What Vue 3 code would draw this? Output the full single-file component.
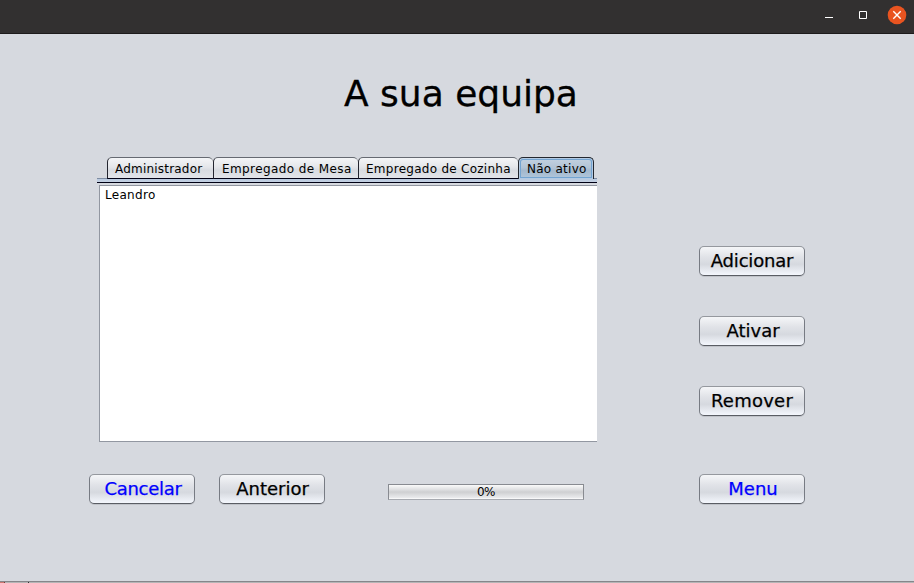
<script setup>
import { ref } from 'vue'

const tabs = [
  { label: 'Administrador', cls: 'tab-admin' },
  { label: 'Empregado de Mesa', cls: 'tab-mesa' },
  { label: 'Empregado de Cozinha', cls: 'tab-cozinha' },
  { label: 'Não ativo', cls: 'tab-inativo' },
]
const active = ref(3)
const members = ['Leandro']
const progress = ref(0)
</script>

<template>
  <div class="window">
    <header class="titlebar">
      <svg class="controls" width="90" height="33" viewBox="0 0 90 33">
        <path d="M1 17.5h8" stroke="#fff" fill="none" />
        <path d="M35.5 11.5h7v7h-7z" stroke="#fff" fill="none" />
        <circle cx="73" cy="15" r="9.3" fill="#e95420" />
        <path d="M69.3 11.3l7.4 7.4M76.7 11.3l-7.4 7.4" stroke="#fff" stroke-width="1.4" fill="none" />
      </svg>
    </header>

    <main class="content">
      <h1 class="title"><span>A sua equipa</span></h1>

      <div class="middle">
        <section class="tabpane">
          <nav class="tabs">
            <button
              v-for="(tab, i) in tabs"
              :key="tab.label"
              class="tab"
              :class="[tab.cls, { selected: i === active }]"
              @click="active = i"
            ><span>{{ tab.label }}</span></button>
          </nav>
          <div class="band"></div>
          <ul class="list">
            <li v-for="m in members" :key="m">{{ m }}</li>
          </ul>
        </section>

        <aside class="actions">
          <button class="btn adicionar">Adicionar</button>
          <button class="btn ativar">Ativar</button>
          <button class="btn remover">Remover</button>
        </aside>
      </div>

      <footer class="bottom">
        <button class="btn link cancelar">Cancelar</button>
        <button class="btn anterior">Anterior</button>
        <div class="progress">
          <div class="fill" :style="{ width: progress + '%' }"></div>
          <span>{{ progress }}%</span>
        </div>
        <button class="btn link menu">Menu</button>
      </footer>
    </main>
    <div class="edge"><i class="red"></i><i class="mark"></i><i class="gray"></i><i class="mark dark"></i></div>
  </div>
</template>

<style>
body {
  margin: 0;
  overflow: hidden;
}
</style>

<style scoped>
* {
  box-sizing: border-box;
}
.window {
  width: 914px;
  height: 583px;
  display: flex;
  flex-direction: column;
  background: #d6d9df;
  color: #000;
  font: 12px "DejaVu Sans", sans-serif;
}
.titlebar {
  height: 34px;
  flex: none;
  display: flex;
  justify-content: flex-end;
  background: #323030;
  border-bottom: 1px solid #1d1b1b;
}
.controls {
  display: block;
}
.content {
  height: 547px;
  flex: none;
}
.title {
  height: 123px;
  margin: 0;
  padding: 39px 0 0 344px;
  font-size: 36px;
  font-weight: 400;
  line-height: 42px;
  white-space: nowrap;
  -webkit-text-stroke: 0.3px #000;
}
.middle {
  display: flex;
  height: 285px;
  padding-left: 97px;
}
.tabpane {
  width: 500px;
  height: 285px;
  flex: none;
}
.tabs {
  display: flex;
  height: 22px;
}
.tabs::before,
.tabs::after {
  content: "";
  width: 10px;
  height: 1px;
  align-self: flex-end;
  background: #7f8da3;
}
.tabs::after {
  width: auto;
  flex: 1;
}
.tab {
  flex: none;
  height: 22px;
  margin: 0;
  padding: 0 0 0 7px;
  border: 1px solid #23252f;
  border-top-color: #666a72;
  border-right: 0;
  border-bottom-color: #000014;
  border-radius: 5px 5px 0 0;
  background: linear-gradient(#f4f5f7, #e4e6ea 45%, #d8dbe1 60%, #e2e4e9);
  color: #000;
  font: 12px/22px "DejaVu Sans", sans-serif;
  text-align: left;
  white-space: nowrap;
}
.tab-admin {
  width: 106px;
  letter-spacing: 0.2px;
}
.tab-mesa {
  width: 145px;
  padding-left: 8px;
  letter-spacing: 0.4px;
}
.tab-cozinha {
  width: 160px;
  letter-spacing: 0.27px;
}
.tab-inativo {
  width: 76px;
  padding-left: 8px;
  letter-spacing: 0.25px;
}
.tab.selected {
  border: 1px solid #23272f;
  border-bottom: 0;
  background: linear-gradient(#c4d2e1, #b3c4d6 45%, #a3b8cd 60%, #b2c8dd);
  box-shadow: inset 0 0 0 1px #b3cae3, inset 0 0 0 2px #73a4d1;
}
.band {
  height: 4px;
  background: linear-gradient(#b8c9df, #c5d1e2);
  border-bottom: 1px solid #000014;
}
.list {
  height: 257px;
  margin: 2px 0 0 2px;
  padding: 2px 5px;
  border: 1px solid #9297a1;
  border-right: 0;
  background: #fff;
  list-style: none;
  line-height: 15px;
  letter-spacing: 0.3px;
}
.actions {
  display: flex;
  flex-direction: column;
  gap: 40px;
  padding: 89px 0 0 102px;
}
.btn {
  width: 106px;
  height: 30px;
  flex: none;
  margin: 0;
  padding: 0 0 1px;
  border: 1px solid #777b83;
  border-top-color: #95989e;
  border-bottom-color: #5a5d64;
  border-radius: 5px;
  background: linear-gradient(#f5f6f8, #e1e3e8 35%, #d6d9df 62%, #f4f7fd);
  box-shadow: 0 1px 0 #c0c3c9;
  color: #000;
  font: 18px/27px "DejaVu Sans", sans-serif;
  text-align: center;
  white-space: nowrap;
  -webkit-text-stroke: 0.25px currentColor;
}
.adicionar {
  letter-spacing: -0.2px;
}
.ativar {
  padding-left: 2px;
}
.remover {
  letter-spacing: 0.25px;
}
.link {
  color: #0000ff;
}
.cancelar {
  padding-left: 2px;
  letter-spacing: -0.3px;
}
.bottom {
  display: flex;
  padding: 32px 0 0 89px;
}
.anterior {
  margin-left: 24px;
  padding-left: 1px;
}
.progress {
  display: grid;
  width: 196px;
  height: 16px;
  margin: 10px 0 0 63px;
  border: 1px solid #888b91;
  border-bottom-color: #a7aab0;
  background: linear-gradient(#fafafa, #dddee0 35%, #cecfd1 50%, #e9eaec 90%, #fff);
  font-size: 12px;
  line-height: 14px;
  letter-spacing: -0.4px;
  text-align: center;
}
.progress > * {
  grid-area: 1 / 1;
}
.fill {
  background: #bf6204;
}
.menu {
  margin-left: 115px;
  padding-left: 2px;
}
.edge {
  display: flex;
  height: 2px;
  flex: none;
  border-top: 1px solid #85868a;
  background: #b5b5b6;
}
.edge i {
  height: 1px;
}
.red {
  width: 4px;
  background: #cc7770;
}
.mark {
  width: 1px;
  background: #793b3b;
}
.gray {
  width: 23px;
}
.dark {
  background: #333;
}
</style>
